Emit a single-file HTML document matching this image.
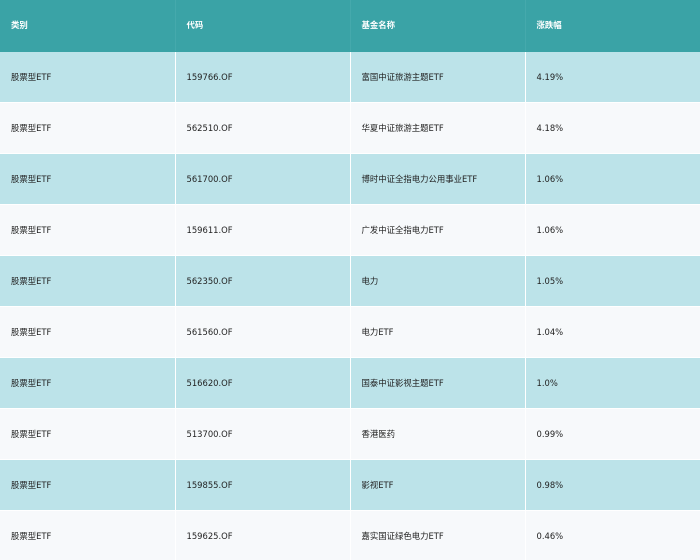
<!DOCTYPE html>
<html><head><meta charset="utf-8"><style>
html,body{margin:0;padding:0;width:700px;height:560px;overflow:hidden;background:#f7f9fb;}
table{border-collapse:collapse;width:700px;table-layout:fixed;font-family:"DejaVu Sans","Noto Sans CJK SC",sans-serif;font-size:8.4px;color:#222;}
td,th{padding:0 0 0 11px;text-align:left;border-right:1px solid #fff;border-bottom:1px solid #fff;height:51px;line-height:12px;vertical-align:middle;box-sizing:border-box;}
td>div,th>div{height:12px;line-height:12px;overflow:visible;white-space:nowrap;}
th{background:#3aa3a6;color:#fff;font-weight:bold;border-bottom:1px solid #3aa3a6;border-right:1px solid #45a9ac;}
tr:nth-child(odd) td{background:#bce3e9;}
tr:nth-child(even) td{background:#f7f9fb;}
</style></head><body>
<table>
<colgroup><col style="width:175px"><col style="width:175px"><col style="width:175px"><col style="width:175px"></colgroup>
<thead><tr><th><div>类别</div></th><th><div>代码</div></th><th><div>基金名称</div></th><th><div>涨跌幅</div></th></tr></thead>
<tbody>
<tr><td><div>股票型ETF</div></td><td><div>159766.OF</div></td><td><div>富国中证旅游主题ETF</div></td><td><div>4.19%</div></td></tr>
<tr><td><div>股票型ETF</div></td><td><div>562510.OF</div></td><td><div>华夏中证旅游主题ETF</div></td><td><div>4.18%</div></td></tr>
<tr><td><div>股票型ETF</div></td><td><div>561700.OF</div></td><td><div>博时中证全指电力公用事业ETF</div></td><td><div>1.06%</div></td></tr>
<tr><td><div>股票型ETF</div></td><td><div>159611.OF</div></td><td><div>广发中证全指电力ETF</div></td><td><div>1.06%</div></td></tr>
<tr><td><div>股票型ETF</div></td><td><div>562350.OF</div></td><td><div>电力</div></td><td><div>1.05%</div></td></tr>
<tr><td><div>股票型ETF</div></td><td><div>561560.OF</div></td><td><div>电力ETF</div></td><td><div>1.04%</div></td></tr>
<tr><td><div>股票型ETF</div></td><td><div>516620.OF</div></td><td><div>国泰中证影视主题ETF</div></td><td><div>1.0%</div></td></tr>
<tr><td><div>股票型ETF</div></td><td><div>513700.OF</div></td><td><div>香港医药</div></td><td><div>0.99%</div></td></tr>
<tr><td><div>股票型ETF</div></td><td><div>159855.OF</div></td><td><div>影视ETF</div></td><td><div>0.98%</div></td></tr>
<tr><td><div>股票型ETF</div></td><td><div>159625.OF</div></td><td><div>嘉实国证绿色电力ETF</div></td><td><div>0.46%</div></td></tr>
</tbody></table>
</body></html>
